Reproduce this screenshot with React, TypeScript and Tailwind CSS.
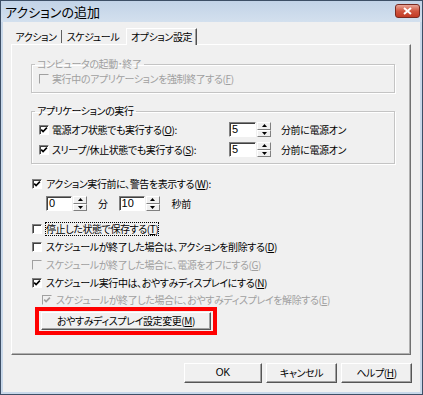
import React from "react";

const Key = ({ k }: { k: string }) => (
  <>
    (<span className="underline underline-offset-[1px]">{k}</span>)
  </>
);

const CheckBox = ({
  checked,
  disabled,
}: {
  checked?: boolean;
  disabled?: boolean;
}) => (
  <span
    className={
      disabled
        ? "flex h-[10px] w-[10px] shrink-0 items-center justify-center border border-t-[#a0a0a0] border-l-[#a0a0a0] border-b-[#f0f0f0] border-r-[#f0f0f0] bg-[#f0f0f0]"
        : "flex h-[10px] w-[10px] shrink-0 items-center justify-center border border-t-[#808080] border-l-[#808080] border-b-white border-r-white bg-white shadow-[inset_1px_1px_0_#404040]"
    }
  >
    {checked && (
      <svg width="8" height="8" viewBox="0 0 8 8">
        <path
          d="M1.2 3.6 L3.1 5.6 L6.9 1.6"
          fill="none"
          stroke={disabled ? "#a0a0a0" : "#000"}
          strokeWidth="1.6"
        />
      </svg>
    )}
  </span>
);

const Spinner = ({ value, w }: { value: string; w: string }) => (
  <div className="flex h-[15px] items-stretch">
    <div
      className={`${w} border border-t-[#808080] border-l-[#808080] border-b-white border-r-white bg-white pl-[2px] text-[11px] leading-[12px] tracking-normal text-black shadow-[inset_1px_1px_0_#404040] font-['Liberation_Sans',sans-serif]`}
    >
      {value}
    </div>
    <div className="ml-[1px] flex w-[14px] flex-col">
      <div className="flex flex-1 items-center justify-center border border-t-white border-l-white border-b-[#808080] border-r-[#808080] bg-[#f0f0f0]">
        <svg width="5" height="3" viewBox="0 0 5 3">
          <path d="M2.5 0 L5 3 L0 3 Z" fill="#000" />
        </svg>
      </div>
      <div className="flex flex-1 items-center justify-center border border-t-white border-l-white border-b-[#808080] border-r-[#808080] bg-[#f0f0f0]">
        <svg width="5" height="3" viewBox="0 0 5 3">
          <path d="M0 0 L5 0 L2.5 3 Z" fill="#000" />
        </svg>
      </div>
    </div>
  </div>
);

const Row = ({
  checked,
  disabled,
  indent,
  focus,
  children,
  h,
}: {
  checked?: boolean;
  disabled?: boolean;
  indent?: boolean;
  focus?: boolean;
  children: React.ReactNode;
  h: string;
}) => (
  <div
    className={`flex items-center gap-[3px] ${h} ${indent ? "ml-[30px]" : "ml-[20px]"} ${disabled ? "text-[#a0a0a0]" : "text-black"}`}
  >
    <CheckBox checked={checked} disabled={disabled} />
    <span
      className={
        focus
          ? "ml-[1px] outline-1 outline-dotted outline-black leading-[12px]"
          : "ml-[1px] leading-[12px]"
      }
    >
      {children}
    </span>
  </div>
);

const Button = ({ w, children }: { w: string; children: React.ReactNode }) => (
  <button
    className={`${w} flex h-[20px] items-center justify-center border border-t-white border-l-white border-b-[#555] border-r-[#555] bg-[#f0f0f0] text-black shadow-[inset_-1px_-1px_0_#a0a0a0] leading-none`}
  >
    {children}
  </button>
);

export default function App() {
  return (
    <div className="flex h-[395px] w-[423px] flex-col border border-[#3d4f66] bg-[#c8d8ea] font-['Noto_Sans_CJK_JP','Noto_Sans',sans-serif] text-[10px] tracking-[-0.4px] [font-feature-settings:'palt']">
      {/* title bar */}
      <div className="flex h-[21px] items-center justify-between bg-gradient-to-b from-[#c2d3e7] to-[#d3e0ee] pl-[4px] pr-[2px]">
        <span className="text-[13px] leading-none tracking-normal text-black">アクションの追加</span>
        <div className="mt-[-1px] flex h-[14px] w-[25px] items-center justify-center rounded-[3px] border border-[#7a2a20] bg-gradient-to-b from-[#e8a598] via-[#d0553f] to-[#c23a24]">
          <svg width="9" height="8" viewBox="0 0 9 8">
            <path d="M1 1 L8 7 M8 1 L1 7" stroke="#fff" strokeWidth="2" />
          </svg>
        </div>
      </div>

      {/* body */}
      <div className="mx-[2px] mb-[2px] flex flex-1 flex-col bg-[#f0f0f0] px-[8px] pt-[6px]">
        {/* tabs */}
        <div className="flex h-[16px] items-end text-black">
          <div className="flex h-[14px] w-[50px] items-center justify-center leading-none">アクション</div>
          <div className="mb-[1px] h-[13px] w-[1px] bg-[#606060]" />
          <div className="flex h-[14px] w-[62px] items-center justify-center leading-none">スケジュール</div>
          <div className="relative z-10 ml-[2px] -mb-[1px] flex h-[17px] w-[71px] items-center justify-center border-t border-l border-r border-t-white border-l-white border-r-[#505050] bg-[#f0f0f0] leading-none shadow-[inset_-1px_0_0_#a0a0a0]">
            オプション設定
          </div>
        </div>

        {/* panel */}
        <div className="flex h-[311px] w-[400px] flex-col border border-t-white border-l-white border-b-[#707070] border-r-[#707070] shadow-[inset_-1px_-1px_0_#b0b0b0]">
          <fieldset className="ml-[19px] mr-[15px] mt-[12px] border border-[#c4c4c4] pb-[6px] shadow-[inset_1px_1px_0_#fff,1px_1px_0_#fff]">
            <legend className="ml-[3px] px-[2px] leading-[14px] text-[#a0a0a0]">コンピュータの起動･終了</legend>
            <div className="flex h-[15px] items-center gap-[3px] pl-[7px] text-[#a0a0a0]">
              <CheckBox disabled />
              <span className="leading-[12px]">
                実行中のアプリケーションを強制終了する<Key k="F" />
              </span>
            </div>
          </fieldset>

          <fieldset className="ml-[19px] mr-[15px] mt-[11px] border border-[#c4c4c4] pb-[6px] shadow-[inset_1px_1px_0_#fff,1px_1px_0_#fff]">
            <legend className="ml-[3px] px-[2px] leading-[14px] text-black">アプリケーションの実行</legend>
            <div className="mt-[4px] flex h-[15px] items-center pl-[7px]">
              <div className="flex w-[190px] items-center gap-[3px]">
                <CheckBox checked />
                <span className="leading-[12px]">
                  電源オフ状態でも実行する<Key k="O" />:
                </span>
              </div>
              <Spinner value="5" w="w-[27px]" />
              <span className="ml-[10px] leading-[12px]">分前に電源オン</span>
            </div>
            <div className="mt-[5px] flex h-[15px] items-center pl-[7px]">
              <div className="flex w-[190px] items-center gap-[3px]">
                <CheckBox checked />
                <span className="leading-[12px]">
                  スリープ/休止状態でも実行する<Key k="S" />:
                </span>
              </div>
              <Spinner value="5" w="w-[27px]" />
              <span className="ml-[10px] leading-[12px]">分前に電源オン</span>
            </div>
          </fieldset>

          <div className="mt-[12px]">
            <Row checked h="h-[15px]">
              アクション実行前に、警告を表示する<Key k="W" />:
            </Row>
          </div>
          <div className="ml-[34px] mt-[5px] flex h-[15px] items-center">
            <Spinner value="0" w="w-[26px]" />
            <span className="ml-[11px] leading-[12px]">分</span>
            <div className="ml-[11px]">
              <Spinner value="10" w="w-[26px]" />
            </div>
            <span className="ml-[12px] leading-[12px]">秒前</span>
          </div>

          <div className="mt-[9px] flex flex-col">
            <Row focus h="h-[18px]">
              停止した状態で保存する<Key k="T" />
            </Row>
            <Row h="h-[18px]">
              スケジュールが終了した場合は、アクションを削除する<Key k="D" />
            </Row>
            <Row disabled h="h-[18px]">
              スケジュールが終了した場合に、電源をオフにする<Key k="G" />
            </Row>
            <Row checked h="h-[18px]">
              スケジュール実行中は、おやすみディスプレイにする<Key k="N" />
            </Row>
            <div className="mt-[1px]">
              <Row checked disabled indent h="h-[14px]">
                スケジュールが終了した場合に、おやすみディスプレイを解除する<Key k="E" />
              </Row>
            </div>
          </div>

          <div className="ml-[23px] flex h-[28px] w-[182px] items-center justify-center border-4 border-[#ff0000]">
            <button className="flex h-[18px] w-[170px] items-center justify-center border border-t-white border-l-white border-b-[#555] border-r-[#555] bg-[#f0f0f0] leading-none text-black shadow-[inset_-1px_-1px_0_#a0a0a0]">
              おやすみディスプレイ設定変更<Key k="M" />
            </button>
          </div>
        </div>

        {/* buttons */}
        <div className="mt-[8px] flex justify-end gap-[4px]">
          <Button w="w-[78px]">
            <span className="font-['Liberation_Sans',sans-serif] text-[10px] tracking-normal">OK</span>
          </Button>
          <Button w="w-[71px]">キャンセル</Button>
          <Button w="w-[71px]">
            ヘルプ<Key k="H" />
          </Button>
        </div>
      </div>
    </div>
  );
}
